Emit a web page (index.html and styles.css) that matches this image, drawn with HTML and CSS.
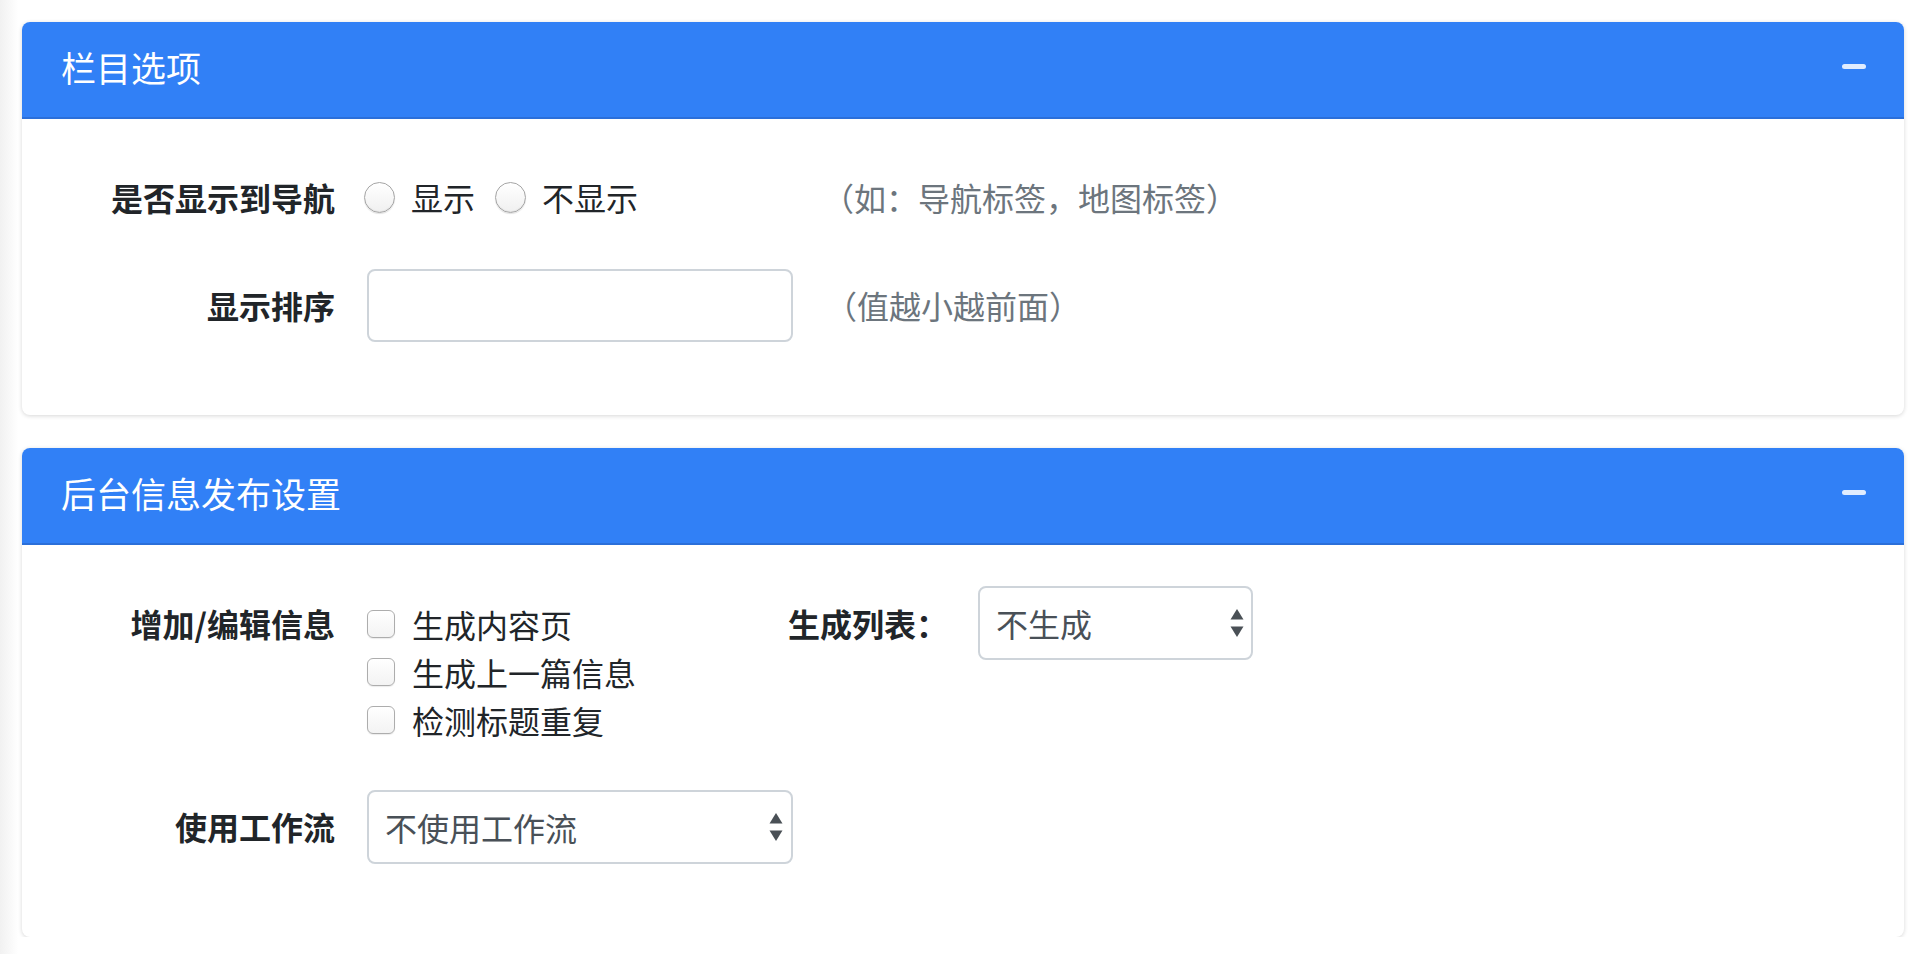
FILE: index.html
```html
<!DOCTYPE html>
<html lang="zh-CN">
<head>
<meta charset="utf-8">
<title>栏目设置</title>
<link rel="stylesheet" href="styles.css">
</head>
<body>
<div class="page">
  <section class="card">
    <header class="card-head">
      <h2 class="card-title">栏目选项</h2>
      <span class="collapse-btn"></span>
    </header>
    <div class="card-body">
      <div class="form-row row-first">
        <label class="row-label">是否显示到导航</label>
        <div class="row-control choices-inline">
          <label class="choice"><span class="radio"></span><span class="choice-text">显示</span></label>
          <label class="choice"><span class="radio"></span><span class="choice-text">不显示</span></label>
        </div>
        <span class="hint">（如：导航标签，地图标签）</span>
      </div>
      <div class="form-row">
        <label class="row-label">显示排序</label>
        <div class="row-control">
          <input class="text-input" type="text">
        </div>
        <span class="hint">（值越小越前面）</span>
      </div>
    </div>
  </section>

  <section class="card">
    <header class="card-head">
      <h2 class="card-title">后台信息发布设置</h2>
      <span class="collapse-btn"></span>
    </header>
    <div class="card-body">
      <div class="form-row row-first">
        <label class="row-label">增加/编辑信息</label>
        <div class="checks">
          <label class="choice check-line"><span class="checkbox"></span><span class="choice-text">生成内容页</span></label>
          <label class="choice check-line"><span class="checkbox"></span><span class="choice-text">生成上一篇信息</span></label>
          <label class="choice check-line"><span class="checkbox"></span><span class="choice-text">检测标题重复</span></label>
        </div>
        <label class="inline-label">生成列表：</label>
        <div class="select-wrap select-small">
          <select class="form-select"><option>不生成</option></select>
          <svg class="select-arrows" width="14" height="30" viewBox="0 0 14 30"><path d="M7 1 L13.5 11.5 L0.5 11.5 Z" fill="#4a5056"/><path d="M0.5 18.5 L13.5 18.5 L7 29 Z" fill="#4a5056"/></svg>
        </div>
      </div>
      <div class="form-row">
        <label class="row-label">使用工作流</label>
        <div class="row-control">
          <div class="select-wrap select-wide">
            <select class="form-select"><option>不使用工作流</option></select>
            <svg class="select-arrows" width="14" height="30" viewBox="0 0 14 30"><path d="M7 1 L13.5 11.5 L0.5 11.5 Z" fill="#4a5056"/><path d="M0.5 18.5 L13.5 18.5 L7 29 Z" fill="#4a5056"/></svg>
          </div>
        </div>
      </div>
    </div>
  </section>
</div>
</body>
</html>
```

FILE: styles.css
```css
html, body {
  margin: 0;
  padding: 0;
}

body {
  background: linear-gradient(90deg, #f1f1f1 0, #fafafa 12px, #ffffff 18px);
  font-family: "Noto Sans CJK SC", "Noto Sans", sans-serif;
  color: #212529;
  font-size: 32px;
  line-height: 48px;
}

.page {
  padding: 22px 20px 0 22px;
  display: flex;
  flex-direction: column;
  gap: 33px;
}

.card {
  background: #fff;
  border-radius: 8px;
  box-shadow: 0 1px 4px rgba(0, 0, 0, 0.16);
}

.card-head {
  height: 95px;
  border-bottom: 2px solid #2b6fd9;
  background: #3180f6;
  border-radius: 8px 8px 0 0;
  display: flex;
  align-items: center;
  justify-content: space-between;
  padding: 0 38px 0 39px;
}

.card-title {
  margin: 0;
  padding-bottom: 6px;
  font-size: 35px;
  line-height: 48px;
  font-weight: 400;
  color: #fff;
}

.collapse-btn {
  width: 24px;
  height: 5px;
  border-radius: 3px;
  background: rgba(255, 255, 255, 0.85);
  margin-bottom: 6px;
}

.card-body {
  padding: 45px 0 73px 0;
  display: flex;
  flex-direction: column;
  gap: 32px;
}

.form-row {
  display: flex;
  align-items: flex-start;
  min-height: 73px;
}

.row-label {
  width: 313px;
  margin-right: 32px;
  flex: none;
  text-align: right;
  font-weight: 700;
  padding: 12px 0 13px;
  color: #212529;
}

.row-control {
  width: 426px;
  flex: none;
  box-sizing: border-box;
}

.choices-inline {
  display: flex;
  align-items: center;
  padding: 12px 0 13px 0;
  margin-left: -3px;
}

.choice {
  display: flex;
  align-items: center;
}

.choices-inline .choice + .choice {
  margin-left: 20px;
}

.radio {
  width: 31px;
  height: 31px;
  box-sizing: border-box;
  border-radius: 50%;
  border: 1px solid #a5a5a5;
  background: linear-gradient(#ffffff, #f0f0f0);
  box-shadow: inset 0 -1px 1px rgba(0, 0, 0, 0.06), 0 1px 1px rgba(0, 0, 0, 0.12);
  margin-right: 16px;
  flex: none;
}

.checkbox {
  width: 28px;
  height: 28px;
  box-sizing: border-box;
  border-radius: 6px;
  border: 1px solid #adadad;
  background: linear-gradient(#ffffff, #f3f3f3);
  box-shadow: 0 1px 1px rgba(0, 0, 0, 0.08);
  margin-right: 17px;
  flex: none;
}

.choice-text {
  color: #212529;
}

.hint {
  margin-left: 32px;
  color: #6c757d;
  padding: 12px 0 13px;
}

.checks {
  width: 421px;
  flex: none;
  display: flex;
  flex-direction: column;
  padding: 12px 0 12px;
}

.inline-label {
  font-weight: 700;
  padding: 12px 0 13px;
  width: 160px;
  margin-right: 30px;
  flex: none;
}

.row-first .row-label,
.row-first .hint,
.row-first .choices-inline,
.row-first .inline-label {
  padding-top: 9px;
  padding-bottom: 16px;
}

.row-first .checks {
  padding-top: 10px;
  padding-bottom: 14px;
}

.text-input {
  display: block;
  box-sizing: border-box;
  width: 426px;
  height: 73px;
  border: 2px solid #ced4da;
  border-radius: 8px;
  background: #fff;
  font-family: inherit;
  font-size: 32px;
  padding: 0 16px;
  color: #495057;
  outline: none;
}

.select-wrap {
  position: relative;
}

.select-small {
  width: 275px;
  margin-top: -4px;
}

.select-wide {
  width: 426px;
}

.form-select {
  display: block;
  box-sizing: border-box;
  width: 100%;
  height: 74px;
  border: 2px solid #ced4da;
  border-radius: 8px;
  background: #fff;
  -webkit-appearance: none;
  appearance: none;
  font-family: inherit;
  font-size: 32px;
  color: #495057;
  padding: 0 40px 0 16px;
  outline: none;
}

.select-arrows {
  position: absolute;
  right: 9px;
  top: 22px;
  pointer-events: none;
}

.select-wide .select-arrows {
  right: 10px;
}
```
